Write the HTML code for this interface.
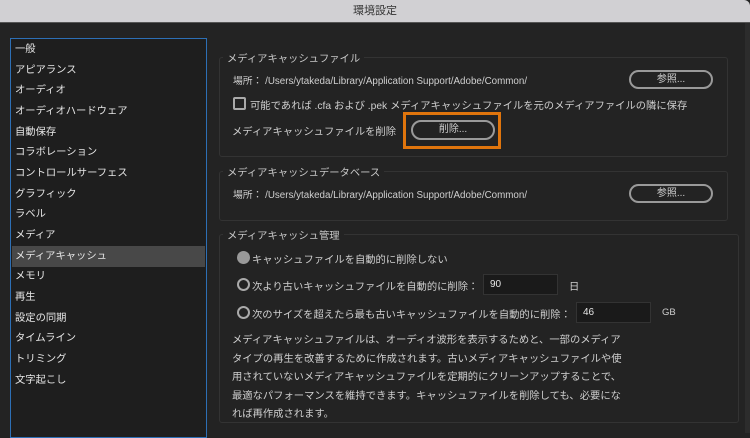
<!DOCTYPE html><html><head><meta charset="utf-8"><style>
*{margin:0;padding:0;box-sizing:border-box}
body{width:750px;height:433px;background:#232323;font-family:"Liberation Sans","Noto Sans CJK JP",sans-serif;color:#cfcfcf;position:relative;overflow:hidden;font-size:10.3px}
.t{position:absolute;white-space:nowrap}
#title{position:absolute;left:0;top:0;width:750px;height:23px;background:#d1d0d3;border-bottom:1px solid #555;border-top-right-radius:6px;color:#333;font-size:11px;text-align:center;line-height:22px}
#side{position:absolute;left:10px;top:38px;width:197px;height:400px;border:1px solid #2d6fb5;background:#1e1e1e}
#side div{position:absolute;left:4px;font-size:10.3px;color:#e6e6e6;height:21px;line-height:21px}
.sel{left:1px!important;width:193px;background:#484848;padding-left:3px}
.grp{position:absolute;border:1px solid #333;border-radius:3px}
.lg{position:absolute;background:#232323;padding:0 4px;color:#c8c8c8;font-size:10.3px}
.btn{position:absolute;border:2px solid #9a9a9a;border-radius:12px;color:#cfcfcf;text-align:center;font-size:10px}
.inp{position:absolute;background:#1a1a1a;border:1px solid #333;color:#e6e6e6;font-size:10px;padding-left:6px;line-height:20px}
.rad{position:absolute;width:13px;height:13px;border-radius:50%;border:2px solid #aaa}
</style></head><body>
<div id="title">環境設定</div>
<div style="position:absolute;left:745px;top:23px;width:5px;height:410px;background:#2c2c2c"></div>
<div id="side">
<div style="top:0">一般</div>
<div style="top:21px">アピアランス</div>
<div style="top:41px">オーディオ</div>
<div style="top:62px">オーディオハードウェア</div>
<div style="top:83px">自動保存</div>
<div style="top:103px">コラボレーション</div>
<div style="top:124px">コントロールサーフェス</div>
<div style="top:145px">グラフィック</div>
<div style="top:165px">ラベル</div>
<div style="top:186px">メディア</div>
<div class="sel" style="top:207px">メディアキャッシュ</div>
<div style="top:227px">メモリ</div>
<div style="top:248px">再生</div>
<div style="top:269px">設定の同期</div>
<div style="top:289px">タイムライン</div>
<div style="top:310px">トリミング</div>
<div style="top:331px">文字起こし</div>
</div>

<div class="grp" style="left:219px;top:57px;width:509px;height:100px"></div>
<div class="lg" style="left:223px;top:50px">メディアキャッシュファイル</div>
<div class="t" style="left:233px;top:73px;font-size:9.8px">場所： /Users/ytakeda/Library/Application Support/Adobe/Common/</div>
<div class="btn" style="left:629px;top:70px;width:84px;height:19px;line-height:15px">参照...</div>
<div style="position:absolute;left:233px;top:97px;width:13px;height:13px;border:2px solid #aaa;border-radius:2px"></div>
<div class="t" style="left:250px;top:97px">可能であれば .cfa および .pek メディアキャッシュファイルを元のメディアファイルの隣に保存</div>
<div class="t" style="left:232px;top:123px">メディアキャッシュファイルを削除</div>
<div style="position:absolute;left:403px;top:112px;width:98px;height:37px;border:3px solid #e0750d"></div>
<div class="btn" style="left:411px;top:120px;width:84px;height:20px;line-height:16px">削除...</div>

<div class="grp" style="left:219px;top:171px;width:509px;height:50px"></div>
<div class="lg" style="left:223px;top:164px">メディアキャッシュデータベース</div>
<div class="t" style="left:233px;top:187px;font-size:9.8px">場所： /Users/ytakeda/Library/Application Support/Adobe/Common/</div>
<div class="btn" style="left:629px;top:184px;width:84px;height:19px;line-height:15px">参照...</div>

<div class="grp" style="left:219px;top:234px;width:520px;height:189px"></div>
<div class="lg" style="left:223px;top:227px">メディアキャッシュ管理</div>
<div class="rad" style="left:237px;top:251px;background:#999;border-color:#999"></div>
<div class="t" style="left:252px;top:251px">キャッシュファイルを自動的に削除しない</div>
<div class="rad" style="left:237px;top:278px"></div>
<div class="t" style="left:252px;top:278px">次より古いキャッシュファイルを自動的に削除：</div>
<div class="inp" style="left:483px;top:274px;width:75px;height:21px">90</div>
<div class="t" style="left:569px;top:278px">日</div>
<div class="rad" style="left:237px;top:306px"></div>
<div class="t" style="left:252px;top:306px">次のサイズを超えたら最も古いキャッシュファイルを自動的に削除：</div>
<div class="inp" style="left:576px;top:302px;width:75px;height:21px">46</div>
<div class="t" style="left:662px;top:307px;font-size:9.5px">GB</div>
<div class="t" style="left:232px;top:332px;line-height:18.5px">メディアキャッシュファイルは、オーディオ波形を表示するためと、一部のメディア<br>タイプの再生を改善するために作成されます。古いメディアキャッシュファイルや使<br>用されていないメディアキャッシュファイルを定期的にクリーンアップすることで、<br>最適なパフォーマンスを維持できます。キャッシュファイルを削除しても、必要にな<br>れば再作成されます。</div>
</body></html>
